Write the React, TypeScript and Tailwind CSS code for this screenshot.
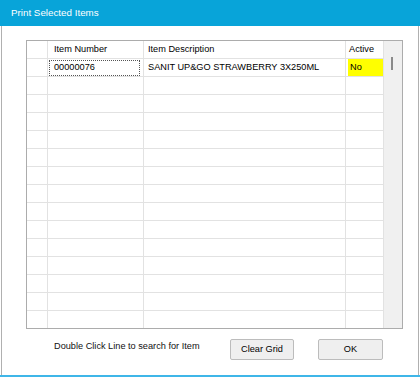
import React from 'react';

const rows = Array.from({ length: 15 }, (_, i) => i);

export default function App() {
  return (
    <div className="w-[420px] h-[377px] bg-white flex flex-col font-['Liberation_Sans',Arial,sans-serif] text-[9.2px] text-black overflow-hidden">
      <div className="h-[26px] bg-[#08a4d9] text-white text-[9.8px] pl-[11px] flex items-center shrink-0">
        Print Selected Items
      </div>

      <div className="flex-1 flex flex-col ml-px mr-px border-l border-r border-[#b0b0b0]">
        <div className="mt-[14px] ml-[24px] w-[377px] h-[289px] border border-[#acacac] flex overflow-hidden">
          <div className="w-[357px] flex flex-col overflow-hidden">
            <div className="flex h-[18px] shrink-0 border-b border-[#e2e2e2]">
              <div className="w-[21px] border-r border-[#e2e2e2]" />
              <div className="w-[96px] border-r border-[#e2e2e2] pl-[6px] flex items-center">Item Number</div>
              <div className="w-[202px] border-r border-[#e2e2e2] pl-[4px] flex items-center">Item Description</div>
              <div className="w-[38px] border-r border-[#e2e2e2] pl-[3px] flex items-center">Active</div>
            </div>
            {rows.map((r) => (
              <div key={r} className="flex h-[18px] shrink-0 border-b border-[#e2e2e2]">
                <div className="w-[21px] border-r border-[#e2e2e2]" />
                <div className="w-[96px] border-r border-[#e2e2e2] flex">
                  {r === 0 && (
                    <div className="flex-1 mt-px ml-px mr-[3px] border border-dotted border-[#555] pl-[4px] flex items-center">
                      00000076
                    </div>
                  )}
                </div>
                <div className="w-[202px] border-r border-[#e2e2e2] pl-[4px] flex items-center">
                  {r === 0 && 'SANIT UP&GO STRAWBERRY 3X250ML'}
                </div>
                <div className="w-[38px] border-r border-[#e2e2e2] flex">
                  {r === 0 && (
                    <div className="flex-1 ml-[2px] bg-[#ffff00] pl-[2px] flex items-center">No</div>
                  )}
                </div>
              </div>
            ))}
          </div>
          <div className="w-[18px] bg-[#f0f0f0] pt-[16px] pl-[7px]">
            <div className="w-[2px] h-[13px] bg-[#8a8a8a]" />
          </div>
        </div>

        <div className="mt-[10px] pl-[52px] flex items-start">
          <span className="w-[176px] leading-[14px] text-[#111]">Double Click Line to search for Item</span>
          <button className="w-[64px] h-[21px] bg-[#efefef] border border-[#bcbcbc] rounded-[2px] text-[9.2px] text-black">
            Clear Grid
          </button>
          <button className="ml-[24px] w-[65px] h-[21px] bg-[#efefef] border border-[#bcbcbc] rounded-[2px] text-[9.2px] text-black">
            OK
          </button>
        </div>
      </div>

      <div className="h-[2px] bg-[#3fb6e8] shrink-0" />
    </div>
  );
}
